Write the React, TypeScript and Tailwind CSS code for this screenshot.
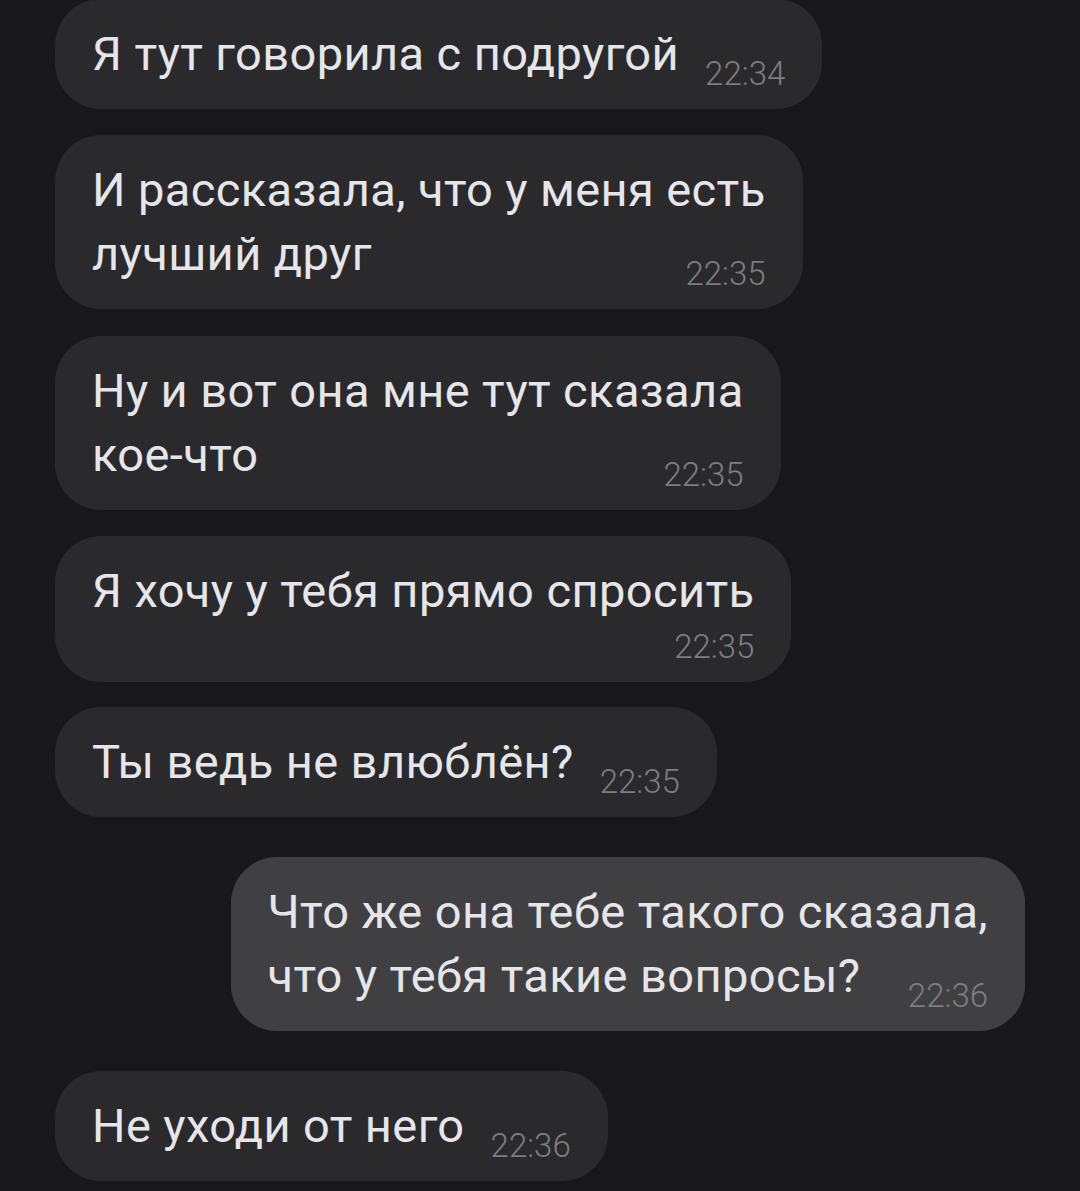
import React from "react";

type Msg = {
  lines: string[];
  time: string;
  out?: boolean;
  timeOwnLine?: boolean;
  gap: string;
};

const messages: Msg[] = [
  { lines: ["Я тут говорила с подругой"], time: "22:34", gap: "-mt-[1px]" },
  { lines: ["И рассказала, что у меня есть", "лучший друг"], time: "22:35", gap: "mt-[26px]" },
  { lines: ["Ну и вот она мне тут сказала", "кое-что"], time: "22:35", gap: "mt-[27px]" },
  { lines: ["Я хочу у тебя прямо спросить"], time: "22:35", timeOwnLine: true, gap: "mt-[26px]" },
  { lines: ["Ты ведь не влюблён?"], time: "22:35", gap: "mt-[25px]" },
  {
    lines: ["Что же она тебе такого сказала,", "что у тебя такие вопросы?"],
    time: "22:36",
    out: true,
    gap: "mt-[40px]",
  },
  { lines: ["Не уходи от него"], time: "22:36", gap: "mt-[40px]" },
];

function Time({ t }: { t: string }) {
  return (
    <span className="shrink-0 text-[33px] leading-[24px] tracking-normal text-[#7d7d81] font-light">
      {t}
    </span>
  );
}

function Bubble({ m }: { m: Msg }) {
  const last = m.lines[m.lines.length - 1];
  const rest = m.lines.slice(0, -1);
  return (
    <div className={`flex ${m.out ? "justify-end" : "justify-start"} ${m.gap}`}>
      <div
        className={`flex flex-col rounded-[46px] px-[37px] py-[23px] ${
          m.out ? "bg-[#404043]" : "bg-[#2a2a2d]"
        }`}
      >
        {rest.map((l) => (
          <div key={l} className="whitespace-nowrap">
            {l}
          </div>
        ))}
        {m.timeOwnLine ? (
          <>
            <div className="whitespace-nowrap">{last}</div>
            <div className="flex justify-end h-[36px] items-end">
              <Time t={m.time} />
            </div>
          </>
        ) : (
          <div className="flex items-end justify-between gap-[26px]">
            <span className="whitespace-nowrap">{last}</span>
            <Time t={m.time} />
          </div>
        )}
      </div>
    </div>
  );
}

export default function App() {
  return (
    <div
      className="w-[1080px] h-[1191px] overflow-hidden bg-[#18181a] px-[55px] text-[47px] leading-[64px] tracking-[0.4px] text-[#e6e6ea]"
      style={{ fontFamily: "Roboto, 'Noto Sans', sans-serif" }}
    >
      {messages.map((m, i) => (
        <Bubble key={i} m={m} />
      ))}
    </div>
  );
}
